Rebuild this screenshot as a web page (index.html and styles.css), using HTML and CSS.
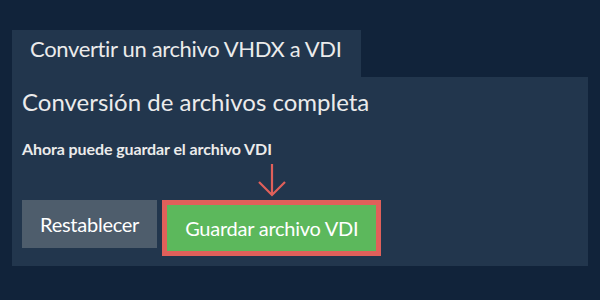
FILE: index.html
```html
<!DOCTYPE html>
<html lang="es">
<head>
<meta charset="utf-8">
<link rel="stylesheet" href="styles.css">
</head>
<body>
<div class="wrap">
  <div class="tab">Convertir un archivo VHDX a VDI</div>
  <div class="panel">
    <h1 class="title">Conversión de archivos completa</h1>
    <p class="note">Ahora puede guardar el archivo VDI</p>
    <div class="actions">
      <button class="btn btn-reset">Restablecer</button>
      <div class="save-wrap">
        <svg class="arrow" width="30" height="34" viewBox="0 0 30 34">
          <path d="M15 0 V31 M2 18 L15 31 L28 18" fill="none" stroke="#e0605a" stroke-width="2.2"/>
        </svg>
        <button class="btn btn-save">Guardar archivo VDI</button>
      </div>
    </div>
  </div>
</div>
</body>
</html>
```
FILE: styles.css
```css
html, body {
  margin: 0;
  padding: 0;
}
body {
  background: #11233a;
  font-family: Lato, "Open Sans", sans-serif;
  color: #ebebeb;
  width: 600px;
  height: 300px;
  overflow: hidden;
}
.wrap {
  padding: 30px 12px 34px 12px;
}
.tab {
  display: inline-block;
  background: #22364d;
  font-size: 22px;
  font-weight: 400;
  letter-spacing: -0.35px;
  line-height: 1.2;
  white-space: nowrap;
  padding: 6px 19px 15px 18px;
}
.panel {
  background: #22364d;
  padding: 10.5px 10px 10px 10px;
}
.title {
  margin: 0;
  font-size: 24px;
  font-weight: 400;
  line-height: 1.2;
  white-space: nowrap;
}
.note {
  margin: 21.7px 0 0 0;
  font-size: 16px;
  font-weight: 700;
  letter-spacing: -0.1px;
  line-height: 21px;
  white-space: nowrap;
}
.actions {
  margin-top: 41px;
  display: flex;
  align-items: flex-start;
  gap: 5px;
}
.btn {
  font-family: Lato, "Open Sans", sans-serif;
  font-size: 20px;
  font-weight: 400;
  letter-spacing: -0.25px;
  line-height: 30px;
  color: #ffffff;
  border: 0;
  border-radius: 0;
  margin: 0;
  white-space: nowrap;
}
.btn-reset {
  background: #4e5d6c;
  padding: 9px 18px;
}
.save-wrap {
  position: relative;
}
.btn-save {
  background: #5cb85c;
  border: 5px solid #e0605a;
  padding: 8px 18px;
  display: block;
}
.arrow {
  position: absolute;
  left: 50%;
  top: -36px;
  transform: translateX(-50%);
}
```
